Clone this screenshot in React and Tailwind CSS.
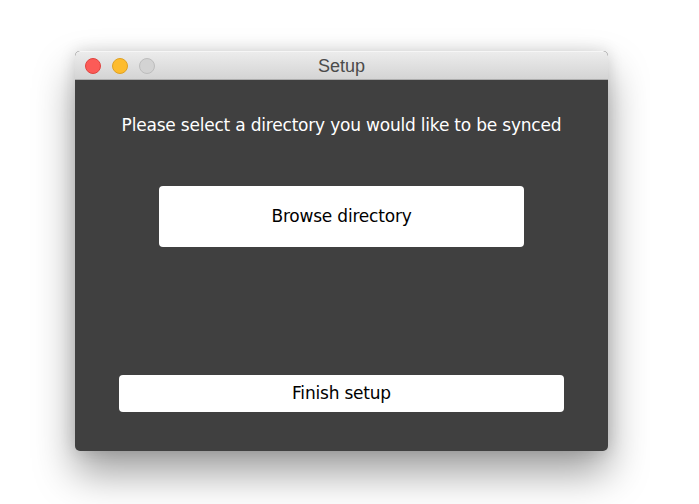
export default function App() {
  return (
    <div className="w-[699px] h-[504px] bg-white overflow-hidden">
      <div className="w-[650px] h-[504px] overflow-hidden pt-[51px] pl-[75px]">
        <div className="w-[533px] h-[400px] rounded-[5px] bg-[#404040] flex flex-col shadow-[0_22px_40px_rgba(0,0,0,0.38),0_0_16px_rgba(0,0,0,0.14)] overflow-hidden">
          {/* title bar */}
          <div className="relative h-[29px] shrink-0 bg-gradient-to-b from-[#ececec] to-[#d4d4d4] border-b border-[#adadad] flex items-center justify-center rounded-t-[5px] border-t border-t-[#f6f6f6]">
            <div className="absolute left-[10px] top-[6px] flex gap-[11px]">
              <span className="w-[16px] h-[16px] rounded-full bg-[#fc5b57] border border-[#e0443f]" />
              <span className="w-[16px] h-[16px] rounded-full bg-[#fdbc2e] border border-[#dfa123]" />
              <span className="w-[16px] h-[16px] rounded-full bg-[#d3d3d3] border border-[#bdbdbd]" />
            </div>
            <span className="text-[18px] text-[#4b4b4b] font-['Liberation_Sans',Arial,sans-serif] translate-y-[1px]">Setup</span>
          </div>
          {/* body */}
          <div className="flex-1 flex flex-col items-center font-['DejaVu_Sans',sans-serif]">
            <p className="mt-[35px] text-[17px] text-white leading-[20px] tracking-[-0.2px]">
              Please select a directory you would like to be synced
            </p>
            <button className="mt-[51px] w-[365px] h-[61px] bg-white rounded-[4px] text-[17px] text-black tracking-[-0.2px]">
              Browse directory
            </button>
            <button className="mt-auto mb-[39px] w-[445px] h-[37px] bg-white rounded-[4px] text-[17px] text-black tracking-[-0.2px]">
              Finish setup
            </button>
          </div>
        </div>
      </div>
    </div>
  );
}
